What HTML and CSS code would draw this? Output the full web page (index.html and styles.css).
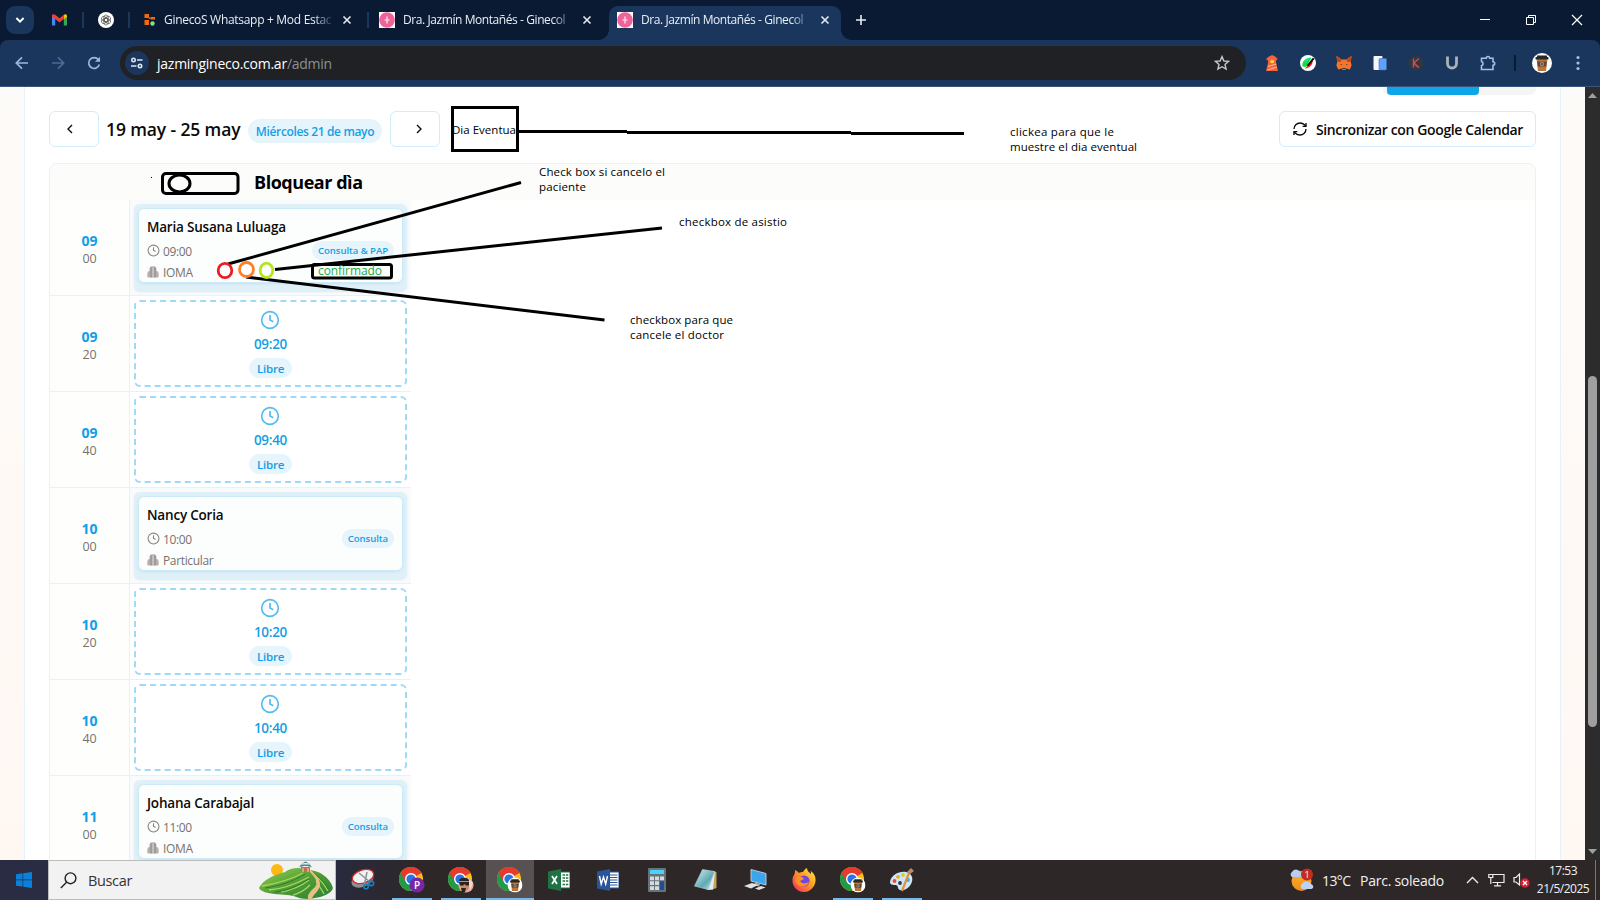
FILE: index.html
```html
<!DOCTYPE html>
<html lang="es">
<head>
<meta charset="utf-8">
<title>Dra. Jazmín Montañés - Ginecología</title>
<link rel="stylesheet" href="styles.css">
</head>
<body>
<svg class="defs" width="0" height="0">
  <defs>
    <linearGradient id="hill" x1="0" y1="0" x2="1" y2="1"><stop offset="0" stop-color="#9bd14e"/><stop offset=".5" stop-color="#4f9c35"/><stop offset="1" stop-color="#2c7f35"/></linearGradient>
    <linearGradient id="fox" x1="1" y1="0" x2="0" y2="1"><stop offset="0" stop-color="#fff04a"/><stop offset=".45" stop-color="#ff9a1f"/><stop offset="1" stop-color="#f0246a"/></linearGradient>
    <linearGradient id="note" x1="0" y1="0" x2="1" y2="1"><stop offset="0" stop-color="#d9f2f5"/><stop offset=".6" stop-color="#5fa9b4"/><stop offset="1" stop-color="#cfe9ee"/></linearGradient>
    <linearGradient id="sun" x1="0" y1="0" x2="0" y2="1"><stop offset="0" stop-color="#ffb62e"/><stop offset="1" stop-color="#f08a1c"/></linearGradient>
    <symbol id="chrome" viewBox="0 0 24 24">
      <circle cx="12" cy="12" r="12" fill="#fbc116"/>
      <path d="M12 12 1.6 6A12 12 0 0 1 22.4 6z" fill="#e33b2e"/>
      <path d="M1.6 6A12 12 0 0 0 12 24l5.2-9L12 12z" fill="#229a48"/>
      <path d="M12 6h10.4A12 12 0 0 0 1.6 6l5.2 9z" fill="#e33b2e"/>
      <circle cx="12" cy="12" r="6" fill="#fff"/><circle cx="12" cy="12" r="4.6" fill="#2a73e8"/>
    </symbol>
    <symbol id="cup" viewBox="0 0 20 20">
      <circle cx="10" cy="10" r="10" fill="#fff"/>
      <path d="M4.5 5.5h11L14 18H6z" fill="#b8763a"/><path d="M3.6 4h12.8v2.6H3.6zM5 2.4h10V4H5z" fill="#2b2724"/>
      <path d="M5.2 8.5h9.6l-.7 5H5.9z" fill="#6d4322"/><circle cx="10" cy="11" r="2.2" fill="#8a8f90"/><path d="M9 11h2" stroke="#2b2724"/>
    </symbol>
    <symbol id="fav" viewBox="0 0 16 16"><path d="M0 0h16v16H0z" fill="#fff"/><circle cx="8" cy="8" r="7.8" fill="#f0629a"/><path d="M8 4.6v7M5.6 8h4.8" stroke="#fbd3e2" stroke-width="1.5"/></symbol>
    <symbol id="x" viewBox="0 0 10 10"><path d="M1.5 1.5l7 7M8.500 1.500l-7 7" stroke="#e6ebf3" stroke-width="1.6"/></symbol>
    <symbol id="clock" viewBox="0 0 24 24"><circle cx="12" cy="12" r="10"/><path d="M12 6v6l4 2"/></symbol>
    <symbol id="building" viewBox="0 0 12 12"><path d="M2.600 2.600Q2.600.4 4.800.3h2.400q2.200.1 2.200 2.300v2.200q2.300.6 2.300 3v2.400q0 1.400-1.400 1.400H1.700Q.3 11.600.3 10.200V7.800q0-2.400 2.300-3z" fill="#b5b0ad"/><path d="M4 1.500v10M8 1.500v10" stroke="#8c8681" stroke-width=".9"/><path d="M6 1.500v10" stroke="#cdc9c6" stroke-width="1.200"/></symbol>
  </defs>
</svg>

<div class="browser">
  <header class="tabstrip">
    <div class="tabsearch"><svg width="10" height="8" viewBox="0 0 10 8"><path d="M1.400 2 5 5.600 8.600 2" fill="none" stroke="#fff" stroke-width="2"/></svg></div>
    <div class="pinned gmail"><svg width="15" height="12" viewBox="0 0 15 12"><path d="M0 2v9.600h3.200V4z" fill="#4285f4"/><path d="M15 2v9.600h-3.200V4z" fill="#34a853"/><path d="M0 1.600C0 0 2 0 3.200.8L7.500 4.200 11.800.8V5L7.500 8.400 3.200 5 0 3z" fill="#ea4335"/><path d="M11.800.8C13-.2 15 0 15 1.800V3l-3.200 2.200z" fill="#fbbc04"/></svg></div>
    <i class="sep"></i>
    <div class="pinned"><svg width="16" height="16" viewBox="0 0 16 16"><circle cx="8" cy="8" r="8" fill="#fff"/><g fill="none" stroke="#555" stroke-width=".7"><rect x="5.800" y="3" width="4.400" height="6.800" rx="2.200"/><rect x="5.800" y="6.200" width="4.400" height="6.800" rx="2.200"/><rect x="5.800" y="3" width="4.400" height="6.800" rx="2.200" transform="rotate(60 8 8)"/><rect x="5.800" y="6.200" width="4.400" height="6.800" rx="2.200" transform="rotate(60 8 8)"/><rect x="5.800" y="3" width="4.400" height="6.800" rx="2.200" transform="rotate(120 8 8)"/><rect x="5.800" y="6.200" width="4.400" height="6.800" rx="2.200" transform="rotate(120 8 8)"/></g></svg></div>
    <i class="sep"></i>
    <div class="tab first"><svg width="16" height="16" viewBox="0 0 16 16"><path d="M1.500 2H6v4H1.500zM7.500 5H12v2.500H7.500zM1.500 8H6v5H1.500z" fill="#f26a0a"/><path d="M5.500 5h2v2h-2z" fill="#c2540a"/><circle cx="9.500" cy="11.500" r="2.200" fill="#7ae57f"/></svg><span class="title t1">GinecoS Whatsapp + Mod Estac</span><svg class="close" width="10" height="10"><use href="#x"/></svg></div>
    <i class="sep"></i>
    <div class="tab second"><svg width="16" height="16"><use href="#fav"/></svg><span class="title">Dra. Jazmín Montañés - Ginecol</span><svg class="close" width="10" height="10"><use href="#x"/></svg></div>
    <div class="tab active"><svg width="16" height="16"><use href="#fav"/></svg><span class="title">Dra. Jazmín Montañés - Ginecol</span><svg class="close" width="10" height="10"><use href="#x"/></svg></div>
    <svg class="plus" width="12" height="12" viewBox="0 0 12 12"><path d="M6 1v10M1 6h10" stroke="#e6ebf3" stroke-width="1.600"/></svg>
    <div class="winctl">
      <svg width="46" height="40" viewBox="0 0 46 40"><path d="M18 19.500h10" stroke="#fff"/></svg>
      <svg width="46" height="40" viewBox="0 0 46 40"><path d="M18.500 17.500h7v7h-7zM20.500 17.500v-2h7v7h-2" fill="none" stroke="#fff"/></svg>
      <svg width="46" height="40" viewBox="0 0 46 40"><path d="M18 15l10 10M28 15 18 25" stroke="#fff" stroke-width="1.200"/></svg>
    </div>
  </header>

  <div class="toolbar">
    <div class="nav">
      <svg width="36" height="36" viewBox="0 0 36 36"><path d="M24 18H12.500M18 12.300 12.300 18l5.700 5.700" fill="none" stroke="#9fb6dc" stroke-width="1.700"/></svg>
      <svg width="36" height="36" viewBox="0 0 36 36"><path d="M12 18h11.500M18 12.300l5.700 5.700-5.700 5.700" fill="none" stroke="#4d6a97" stroke-width="1.700"/></svg>
      <svg width="36" height="36" viewBox="0 0 36 36"><path d="M22.300 14.500a5.400 5.400 0 1 0 1 5" fill="none" stroke="#9fb6dc" stroke-width="1.700"/><path d="M24 11.800v5h-5z" fill="#9fb6dc"/></svg>
    </div>
    <div class="omnibox">
      <span class="site"><svg width="14" height="12" viewBox="0 0 14 12" fill="none" stroke="#dce6f5" stroke-width="1.600"><circle cx="3.500" cy="3" r="1.700"/><path d="M7 3h5.500M1 9h5.500"/><circle cx="10" cy="9" r="1.700"/></svg></span>
      <span class="url">jazmingineco.com.ar<em>/admin</em></span>
      <svg class="star" width="16" height="16" viewBox="0 0 16 16"><path d="M8 1.600 9.900 6l4.700.400-3.600 3.100 1.100 4.600L8 11.700l-4.100 2.400L5 9.500 1.400 6.400 6.100 6z" fill="none" stroke="#c3c6cb" stroke-width="1.400"/></svg>
    </div>
    <div class="exts">
      <svg width="16" height="16" viewBox="0 0 16 16"><path d="M5 1.600 8 0l3.200 1.600 2 2v1.600H12V8l2 8H2l2-8V5.200H2.500V3.600z" fill="#f4633c"/><path d="M6.500 5.200H10V8H6.500z" fill="#ffd43c"/><path d="m4 11.500 8.500-2.500M3.500 15l9.500-3" stroke="#ffb08f" stroke-width="1.200"/></svg>
      <svg width="16" height="16" viewBox="0 0 16 16"><circle cx="8" cy="8" r="8" fill="#fff"/><path d="M2.500 11.500C1.500 6.500 5.500 2.500 11.500 2.500L6 12z" fill="#10e030"/><path d="M4 6.500C6 3.500 8 3 10 3L6 7z" fill="#23d7e0"/><path d="M5 13.500 12.500 5.500c1 3-2.500 7.800-7.500 8z" fill="#f21c1c"/><path d="M6.500 10.500 13 2.500 14.500 4 8.500 11z" fill="#111"/></svg>
      <svg width="16" height="16" viewBox="0 0 16 16"><path d="M.5 1 6 4.500h4L15.500 1l-.7 6 .8 3.500-1.800 4-3.300-1L9 15H7l-1.500-1.500-3.300 1-1.800-4L1.200 7z" fill="#f5762b"/><path d="M.5 1 6 4.500 4.500 7 1.200 7zM15.500 1 10 4.500 11.500 7l3.300 0z" fill="#bc4a1c"/><path d="M4 9l2 .6-.4 1zM12 9l-2 .6.4 1zM6.500 13h3V14h-3z" fill="#26323c"/></svg>
      <svg width="14" height="16" viewBox="0 0 14 16"><rect x=".5" y="1" width="9" height="14" rx="1" fill="#f4f6f9"/><rect x="6" y="3.500" width="7.500" height="11.500" rx="1" fill="#62a1fb" stroke="#3c6fae" stroke-width=".6"/></svg>
      <svg width="16" height="16" viewBox="0 0 16 16"><circle cx="8" cy="8" r="7.800" fill="#2c3846"/><path d="M5.500 3.500v9M10.800 3.500 6 8l4.800 4.600" fill="none" stroke="#d34b4b" stroke-width="1.500"/></svg>
      <svg width="16" height="16" viewBox="0 0 16 16"><path d="M3.500 1.500v7a4.300 4.300 0 0 0 9 0v-7" fill="none" stroke="#a9b2b8" stroke-width="2.800"/></svg>
      <svg width="18" height="18" viewBox="0 0 18 18"><path d="M2.500 4.200h4.800a1.700 1.700 0 1 1 3.400 0h3.300v3.600a1.700 1.700 0 1 1 0 3.400v4.300H2.500v-3.700a2.200 2.200 0 0 0 0-4.200z" fill="none" stroke="#a9bfe2" stroke-width="1.600"/></svg>
    </div>
    <i class="tbsep"></i>
    <svg class="avatar" width="20" height="20"><use href="#cup"/></svg>
    <svg width="4" height="16" viewBox="0 0 4 16" fill="#a9bfe2"><circle cx="2" cy="2.500" r="1.600"/><circle cx="2" cy="8" r="1.600"/><circle cx="2" cy="13.500" r="1.600"/></svg>
  </div>

  <main class="viewport">
    <div class="panel">
      <div class="viewswitch"><b></b></div>
      <div class="actions">
        <span class="btn prev"><svg width="16" height="16" viewBox="0 0 24 24"><path d="m15 18-6-6 6-6"/></svg></span>
        <h2>19 may - 25 may</h2>
        <span class="datepill">Miércoles 21 de mayo</span>
        <span class="btn next"><svg width="16" height="16" viewBox="0 0 24 24"><path d="m9 18 6-6-6-6"/></svg></span>
        <span class="btn sync"><svg width="16" height="16" viewBox="0 0 24 24"><path d="M3 12a9 9 0 0 1 9-9 9.750 9.750 0 0 1 6.740 2.740L21 8"/><path d="M21 3v5h-5"/><path d="M21 12a9 9 0 0 1-9 9 9.750 9.750 0 0 1-6.740-2.740L3 16"/><path d="M8 16H3v5"/></svg><span>Sincronizar con Google Calendar</span></span>
      </div>
      <section class="agenda">
        <div class="dayhead"></div>
        <div class="row"><div class="hour"><b>09</b><span>00</span></div><div class="cell busy"><div class="slot"><div class="card"><strong>Maria Susana Luluaga</strong><div class="info"><svg class="ci" width="13" height="13"><use href="#clock"/></svg><span>09:00</span><em>Consulta &amp; PAP</em></div><div class="info ins"><svg width="12" height="12"><use href="#building"/></svg><span>IOMA</span></div></div></div></div></div>
        <div class="row"><div class="hour"><b>09</b><span>20</span></div><div class="cell"><div class="free"><svg class="big" width="20" height="20"><use href="#clock"/></svg><b>09:20</b><em>Libre</em></div></div></div>
        <div class="row"><div class="hour"><b>09</b><span>40</span></div><div class="cell"><div class="free"><svg class="big" width="20" height="20"><use href="#clock"/></svg><b>09:40</b><em>Libre</em></div></div></div>
        <div class="row"><div class="hour"><b>10</b><span>00</span></div><div class="cell busy"><div class="slot"><div class="card"><strong>Nancy Coria</strong><div class="info"><svg class="ci" width="13" height="13"><use href="#clock"/></svg><span>10:00</span><em>Consulta</em></div><div class="info ins"><svg width="12" height="12"><use href="#building"/></svg><span>Particular</span></div></div></div></div></div>
        <div class="row"><div class="hour"><b>10</b><span>20</span></div><div class="cell"><div class="free"><svg class="big" width="20" height="20"><use href="#clock"/></svg><b>10:20</b><em>Libre</em></div></div></div>
        <div class="row"><div class="hour"><b>10</b><span>40</span></div><div class="cell"><div class="free"><svg class="big" width="20" height="20"><use href="#clock"/></svg><b>10:40</b><em>Libre</em></div></div></div>
        <div class="row"><div class="hour"><b>11</b><span>00</span></div><div class="cell busy"><div class="slot"><div class="card"><strong>Johana Carabajal</strong><div class="info"><svg class="ci" width="13" height="13"><use href="#clock"/></svg><span>11:00</span><em>Consulta</em></div><div class="info ins"><svg width="12" height="12"><use href="#building"/></svg><span>IOMA</span></div></div></div></div></div>
      </section>
    </div>
    <div class="scroll"><svg width="9" height="5" viewBox="0 0 9 5"><path d="M0 5 4.500 0 9 5z" fill="#9f9f9f"/></svg><i></i><svg class="down" width="9" height="5" viewBox="0 0 9 5"><path d="M0 0 4.500 5 9 0z" fill="#9f9f9f"/></svg></div>
  </main>

  <footer class="taskbar">
    <div class="start"><svg width="16" height="16" viewBox="0 0 16 16" fill="#0a80dc"><path d="M0 2.200 6.500 1.300v6.200H0zM7.200 1.200 16 0v7.500H7.200zM0 8.300h6.500v6.300L0 13.700zM7.200 8.300H16V16l-8.800-1.200z"/></svg></div>
    <div class="search"><svg width="17" height="17" viewBox="0 0 17 17" fill="none" stroke="#222" stroke-width="1.400"><circle cx="10.500" cy="6.300" r="5.400"/><path d="M6.600 10.200.8 16"/></svg><span>Buscar</span>
      <svg class="landscape" width="75" height="38" viewBox="0 0 75 38"><circle cx="18" cy="9" r="6" fill="#fdb813"/><path d="M0 27C4 19 14 14 26 11 32 6 42 6 49 9 62 9 72 19 74 27 72 34 60 37 49 38 38 38 36 34 28 34 14 33 2 32 0 27z" fill="url(#hill)"/><g fill="none" stroke="#a5d95c" stroke-width="1.300"><path d="M3 25c12-2 26-5 41-13M10 29c14-1 27-6 40-13M22 31c12-2 20-6 28-12M34 34c7-2 12-5 17-10M56 14c5 4 9 9 13 16M57 20c3 5 6 9 8 13"/></g><g fill="none" stroke="#2f7a31" stroke-width="1"><path d="M6 27c14-2 27-6 40-14M16 31c12-1 23-6 34-13M54 12c6 4 12 10 15 16"/></g><path d="M49 9c7 7 11 12 7 17-4 4-8 7-7 12h4c0-4 8-8 8-15 0-6-5-9-9-14z" fill="#e5c083"/><path d="M40 6.500c4-2 9-2 13 0l-2-3h-9zM42 3c3-1.500 6-1.500 9 0L46.500.500z" fill="#47878c"/><path d="M42 6h9v5h-9z" fill="#c96b50"/><path d="M44 7v4M49 7v4" stroke="#f2d9c4"/></svg>
    </div>
    <nav class="apps">
      <span><svg width="24" height="24" viewBox="0 0 24 24"><ellipse cx="11.500" cy="12" rx="11.500" ry="6.800" fill="#8c8f93" transform="rotate(-22 11.500 12)"/><ellipse cx="12" cy="8.500" rx="11" ry="6.500" fill="#f1f2f4" stroke="#cf2b2b" stroke-width="1.300" transform="rotate(-18 12 8.500)"/><path d="m8 5 11 9M16 4l-2.500 12" stroke="#8c9298" stroke-width="1.500"/><g fill="none" stroke="#1b7fc0" stroke-width="1.600"><circle cx="15" cy="18.500" r="2.300"/><circle cx="20.300" cy="15.300" r="2.300"/></g></svg></span>
      <span class="open"><svg width="26" height="26" viewBox="0 0 26 26"><use href="#chrome" width="24" height="24"/><circle cx="18" cy="18" r="7.600" fill="#7627a5"/><text class="badge" x="18" y="22" text-anchor="middle">P</text></svg></span>
      <span class="open"><svg width="26" height="26" viewBox="0 0 26 26"><use href="#chrome" width="24" height="24"/><circle cx="18" cy="18" r="7.600" fill="#e9a79a"/><path d="m20 11 5 5-3 8z" fill="#f0d9cb"/><path d="M12 14c2-4 8-4 9 0v5c0 4-3 5-4 5-3 0-5-4-5-6z" fill="#c98a6d"/><path d="M11 13c2-3 8-3 10 0v1H11zM11 15h10v3.500h-3l-1.500-1.500-1.500 1.500h-3zM13 21h5l-1 4h-3z" fill="#2a2220"/></svg></span>
      <span class="open current"><svg width="26" height="26" viewBox="0 0 26 26"><use href="#chrome" width="24" height="24"/><use href="#cup" x="10.500" y="10.500" width="15" height="15"/></svg></span>
      <span><svg width="22" height="22" viewBox="0 0 22 22"><path d="M11 3h11v16H11z" fill="#fff" stroke="#217346"/><path d="M14.500 6h6M14.500 9h6M14.500 12h6M14.500 15.500h6" stroke="#217346" stroke-width="1.600" stroke-dasharray="2.500 .8"/><path d="M0 2.500 13 0v22L0 19.500z" fill="#1f7244"/><path d="m4 7 5 8M9 7l-5 8" stroke="#fff" stroke-width="1.700"/></svg></span>
      <span><svg width="22" height="22" viewBox="0 0 22 22"><path d="M11 3h11v16H11z" fill="#fff" stroke="#2b579a"/><path d="M13 6h7.500M13 8.500h7.500M13 11h7.500M13 13.500h7.500M13 16h7.500" stroke="#2b579a" stroke-width="1"/><path d="M0 2.500 13 0v22L0 19.500z" fill="#2a5699"/><path d="m2.500 7 1.700 8L6.500 8l2.200 7 1.800-8" fill="none" stroke="#fff" stroke-width="1.400"/></svg></span>
      <span><svg width="18" height="24" viewBox="0 0 18 24"><rect width="18" height="24" rx="1" fill="#68727b"/><path d="M2 2h14v4H2z" fill="#4bd3f8"/><path d="M2 8.500h4v3.800H2zM7 8.500h4v3.800H7zM12 8.500h4v3.800h-4zM2 13.300h4v3.800H2zM7 13.300h4v3.800H7zM2 18.200h4V22H2zM7 18.200h4V22H7z" fill="#d5dadd"/><path d="M12 13.300h4V22h-4z" fill="#1e4f91"/></svg></span>
      <span><svg width="24" height="24" viewBox="0 0 24 24"><path d="m17 22 5.500-2V4L19 3z" fill="#c3a457"/><path d="M8 2 21 3.500l-2 18-6 .5z" fill="#e3eced"/><path d="M8.500 1.500 20.500 3.500 14 21.500.5 18z" fill="url(#note)" stroke="#a8c5ca" stroke-width=".7"/></svg></span>
      <span><svg width="24" height="24" viewBox="0 0 24 24"><path d="m8 1.500 15 4V17L8 13z" fill="#3ba5ee" stroke="#b8c9d5"/><path d="m12 14.500 5 1.500-1 2.500-5-1z" fill="#a5adb4"/><path d="m1 18 8-3 6 2-7 3.500zM12 20.500l6-2.500 4.500 1.500L16 22z" fill="#dfe3e6"/></svg></span>
      <span><svg width="24" height="24" viewBox="0 0 24 24"><path d="M2 7c1-2 1-3 1-5 2 1 3 2 4 3 1-1 3-1 4-1 1-2 2-3 4-4 0 3 2 4 4 6 0-1 0-2-.5-3C22 5 24 9 23.500 13 23 19 18 24 12 24 5 24 0 18 .5 12c0-2 .5-3.500 1.500-5z" fill="url(#fox)"/><circle cx="12" cy="13" r="5.600" fill="#7047e0"/><path d="M5 9c3-1 6 0 7 2l-4 2c2 3 5 3 9 1-2 6-12 6-14-1z" fill="#ff9022"/></svg></span>
      <span class="open"><svg width="26" height="26" viewBox="0 0 26 26"><use href="#chrome" width="24" height="24"/><use href="#cup" x="10.500" y="10.500" width="15" height="15"/></svg></span>
      <span class="open"><svg width="24" height="24" viewBox="0 0 24 24"><path d="M0 14C1 7 9 3 16 4c6 1 8 7 5 12-2 4-7 7-11 6-3-1-1-4-4-5-3 0-6 0-6-3z" fill="#cfe6f5"/><circle cx="4.500" cy="13" r="1.900" fill="#e84838"/><circle cx="8" cy="8.800" r="1.900" fill="#f0a524"/><circle cx="13" cy="7" r="1.900" fill="#d9d024"/><circle cx="18" cy="12" r="1.900" fill="#48a4ee"/><circle cx="10" cy="15" r="1.900" fill="#29354a"/><path d="m12 23 7-18" stroke="#e0913b" stroke-width="2.200"/><path d="m17 4 4-4 3 3-4 3z" fill="#b98b66"/></svg></span>
    </nav>
    <div class="tray">
      <svg class="weather" width="26" height="24" viewBox="0 0 26 24"><circle cx="12.500" cy="13" r="10" fill="url(#sun)"/><path d="M3 9a3 3 0 0 1 0-5 5 5 0 0 1 9 1c2 1 2 4 0 4z" fill="#b9cdf3"/><path d="M13 21a3 3 0 0 1 0-5 5 5 0 0 1 9 0c3 1 3 5 0 5z" fill="#bed2f8"/><circle cx="18" cy="6.500" r="6" fill="#c32d20"/><text class="wn" x="18" y="10" text-anchor="middle">1</text></svg>
      <span class="temp">13°C</span><span class="sky">Parc. soleado</span>
      <svg class="up" width="13" height="8" viewBox="0 0 13 8"><path d="m1 7 5.500-5.500L12 7" fill="none" stroke="#eee" stroke-width="1.400"/></svg>
      <svg class="net" width="17" height="14" viewBox="0 0 17 14"><path d="M5 1.500h11v8H4.500M9.500 9.500v3M6 12.800h7M.8 1.500h4v3h-4zM2.800 4.500V11" fill="none" stroke="#eee" stroke-width="1.200"/></svg>
      <svg class="vol" width="17" height="15" viewBox="0 0 17 15"><path d="M1 4.500h2L6.500 1v11L3 9H1z" fill="none" stroke="#eee" stroke-width="1.200"/><circle cx="12" cy="10" r="4.700" fill="#d9202e"/><path d="m10 8 4 4M14 8l-4 4" stroke="#fff" stroke-width="1.300"/></svg>
      <div class="clock"><span>17:53</span><span>21/5/2025</span></div>
      <i></i>
    </div>
  </footer>

  <!-- Hand-drawn notes laid over the page -->
  <svg class="notes" width="1600" height="900" viewBox="0 0 1600 900">
    <g fill="none" stroke="#000" stroke-width="3" shape-rendering="crispEdges">
      <rect x="452.500" y="107.500" width="65" height="43"/>
      <path d="M519 131.500h108M627 132.500h224M851 133.500h113"/>
    </g>
    <g fill="none" stroke="#000" stroke-width="3">
      <path d="M228 264 521 182.500M275 269.500 662 228M246 277l358.500 43"/>
      <rect x="162.500" y="173.500" width="75.500" height="20" rx="3.500"/>
      <ellipse cx="179.500" cy="183.500" rx="10.500" ry="8.500"/>
      <rect x="312.500" y="264.500" width="79" height="13.500" rx="2"/>
    </g>
    <g fill="none" stroke-width="2.800">
      <ellipse cx="225" cy="270.500" rx="6.800" ry="7.200" stroke="#ed1c24"/>
      <ellipse cx="246.500" cy="269.500" rx="7" ry="7" stroke="#ff7f27"/>
      <ellipse cx="266.500" cy="270.300" rx="6.300" ry="7.200" stroke="#b5e61d"/>
    </g>
    <rect x="151" y="177" width="1" height="1"/>
    <g class="hand">
      <text x="452" y="134" textLength="64">Dia Eventua</text>
      <text x="1010" y="136" textLength="104">clickea para que le</text>
      <text x="1010" y="151" textLength="127">muestre el dia eventual</text>
      <text x="539" y="176" textLength="126">Check box si cancelo el</text>
      <text x="539" y="191" textLength="47">paciente</text>
      <text x="679" y="226" textLength="108">checkbox de asistio</text>
      <text x="630" y="324" textLength="103">checkbox para que</text>
      <text x="630" y="339" textLength="94">cancele el doctor</text>
      <text class="ok" x="318" y="274.500" textLength="64">confirmado</text>
    </g>
    <text class="block" x="254" y="189" textLength="109">Bloquear dìa</text>
  </svg>
</div>
</body>
</html>
```

FILE: styles.css
```css
* { box-sizing: border-box; }
body { margin: 0; overflow: hidden; font-family: "Open Sans", "Noto Sans", sans-serif; }
svg { display: block; flex: none; }
em { font-style: normal; }
.defs { position: absolute; }
.browser { position: relative; width: 1600px; height: 900px; display: flex; flex-direction: column; background: #0a1a33; }

/* Tabs */
.tabstrip { height: 40px; display: flex; align-items: center; padding-left: 6px; flex: none; }
.tabsearch { width: 28px; height: 28px; border-radius: 9px; background: #1a365d; display: flex; align-items: center; justify-content: center; margin-right: 3px; }
.pinned { width: 45px; display: flex; justify-content: center; }
.sep { width: 2px; height: 16px; background: #1a365d; flex: none; margin-right: -1px; }
.tab { display: flex; align-items: center; height: 34px; padding-bottom: 6px; margin-top: 6px; flex: none; }
.tab.first { width: 238px; padding-left: 14px; padding-right: 15px; }
.tab.second { width: 241px; padding-left: 11px; padding-right: 17px; }
.title { flex: none; width: 174px; margin-left: 8px; white-space: nowrap; font-size: 12px; line-height: 18px; color: #e9eef6; letter-spacing: -.42px; -webkit-mask-image: linear-gradient(90deg, #000 150px, transparent 170px); mask-image: linear-gradient(90deg, #000 150px, transparent 170px); }
.title.t1 { margin-left: 5px; letter-spacing: -.3px; }
.close { margin-left: auto; }
.tab.active { position: relative; width: 232px; padding-left: 8px; padding-right: 11px; background: #1a365d; border-radius: 9px 9px 0 0; }
.tab.active::before, .tab.active::after { content: ""; position: absolute; bottom: 0; width: 10px; height: 10px; }
.tab.active::before { left: -10px; background: radial-gradient(circle at 0 0, transparent 9.500px, #1a365d 10px); }
.tab.active::after { right: -10px; background: radial-gradient(circle at 100% 0, transparent 9.500px, #1a365d 10px); }
.plus { margin-left: 14px; }
.winctl { display: flex; margin-left: auto; }

/* Toolbar */
.toolbar { height: 47px; flex: none; display: flex; align-items: center; padding: 0 20px 0 4px; background: #1a365d; border-radius: 8px 8px 0 0; border-bottom: 1px solid #3a5480; }
.nav { display: flex; width: 116px; }
.omnibox { width: 1126px; height: 34px; border-radius: 17px; background: #202124; display: flex; align-items: center; padding: 0 16px 0 5px; }
.site { width: 24px; height: 24px; border-radius: 50%; background: #1a365d; display: flex; align-items: center; justify-content: center; }
.url { margin-left: 8px; font-size: 14px; letter-spacing: -.25px; color: #fff; }
.url em { color: #8d9095; }
.star { margin-left: auto; }
.exts { display: grid; grid-template-columns: repeat(7, 36px); justify-items: center; align-items: center; margin-left: 8px; }
.tbsep { width: 2px; height: 16px; margin: 0 16px 0 8px; background: #0a1a33; }
.avatar { margin-right: 24px; }

/* Page */
.viewport { flex: 1; min-height: 0; display: flex; overflow: hidden; padding-left: 24px; background: linear-gradient(#fdfbf9, #fff7f2); }
.panel { width: 1537px; flex: none; background: #fff; border: solid #e3f2fb; border-width: 0 1px; padding: 0 24px; }
.viewswitch { width: 153px; height: 8px; margin: 0 0 0 auto; padding-left: 4px; background: #f5f5f4; border-radius: 0 0 6px 6px; }
.viewswitch b { display: block; width: 92px; height: 8px; background: #0ea5e9; border-radius: 0 0 4px 4px; }
.actions { display: flex; align-items: center; height: 36px; margin-top: 16px; }
.btn { height: 36px; border: 1px solid #d0edfb; border-radius: 6px; display: flex; align-items: center; background: #fff; color: #0c0a09; }
.btn svg { fill: none; stroke: #0c0a09; stroke-width: 2; }
.prev, .next { width: 50px; justify-content: center; }
.prev { padding-right: 8px; }
.next { margin-left: 8px; padding-left: 7px; }
.actions h2 { margin: 0 0 0 7px; width: 134px; font-size: 17.500px; font-weight: 600; white-space: nowrap; letter-spacing: -.12px; color: #0c0a09; }
.datepill { margin: 4px 0 0 8px; width: 134px; height: 24px; border-radius: 12px; background: #e6f4fc; color: #149fe4; font-size: 12px; line-height: 25px; font-weight: 600; text-align: center; white-space: nowrap; letter-spacing: -.36px; }
.sync { width: 257px; margin-left: auto; padding-left: 12px; font-size: 14px; font-weight: 600; white-space: nowrap; letter-spacing: -.38px; }
.sync span { margin-left: 8px; }
.agenda { margin-top: 16px; border: 1px solid #e2f3fc; border-radius: 8px; height: 760px; overflow: hidden; }
.dayhead { height: 36px; background: #fcfcfb; }
.row { display: grid; grid-template-columns: 80px 281px; height: 96px; width: 361px; border-bottom: 1px solid #e4f3fb; }
.hour { border-right: 1px solid #e4f3fb; background: #fefefd; display: flex; flex-direction: column; align-items: center; justify-content: center; padding-top: 3px; font-size: 12.500px; line-height: 18px; color: #78716c; letter-spacing: -.2px; }
.hour b { font-size: 14px; line-height: 19px; color: #0ea0e8; letter-spacing: 0; }
.cell { padding: 4px; }
.cell.busy { background: #f8fafc; }
.slot { height: 87px; padding: 4px 4px 8px; background: #e0f0f7; border-radius: 6px; box-shadow: 0 1px 2px #dcebf3; }
.card { height: 75px; padding: 8px 8px 0; border: 1px solid #cdeaf8; border-radius: 6px; background: #fcfefe; box-shadow: 0 1px 3px #c5e4f2; }
.card strong { display: block; font-size: 13.500px; line-height: 20px; font-weight: 600; letter-spacing: -.2px; color: #0c0a09; }
.info { display: flex; align-items: center; height: 19px; margin-top: 4px; font-size: 12px; color: #78716c; letter-spacing: -.35px; }
.info span { margin-left: 3px; padding-top: 1px; }
.info em { margin-left: auto; padding: 0 6px; height: 19px; border-radius: 10px; background: #e6f4fc; color: #149fe4; font-size: 9.600px; line-height: 19px; font-weight: 600; letter-spacing: -.08px; }
.ins { margin-top: 2px; }
.ins span { margin-left: 4px; }
.ci, .big { fill: none; stroke: #8a847f; stroke-width: 2; }
.big { stroke: #56bbee; margin-right: 1px; }
.free { height: 87px; border: 2px dashed #a0d9f5; border-radius: 6px; display: flex; flex-direction: column; align-items: center; padding-top: 8px; color: #149fe4; }
.free b { margin-top: 4px; font-size: 13.500px; line-height: 20px; font-weight: 600; letter-spacing: -.3px; }
.free em { margin-top: 4px; width: 43px; height: 20px; border-radius: 10px; background: #e6f4fc; font-size: 11.500px; line-height: 21px; font-weight: 600; text-align: center; letter-spacing: -.2px; }
.scroll { width: 15px; margin-left: auto; background: #2c2c2c; display: flex; flex-direction: column; align-items: center; padding: 6px 0; }
.scroll i { width: 9px; height: 351px; margin-top: 278px; border-radius: 5px; background: #9f9f9f; }
.scroll .down { margin-top: auto; }

/* Taskbar */
.taskbar { height: 40px; flex: none; display: flex; align-items: center; background: linear-gradient(90deg, #292c43 0, #292a3d 340px, #2e2728 420px, #2e2728); color: #f1f1f1; }
.start { width: 48px; display: flex; justify-content: center; }
.search { width: 288px; height: 40px; display: flex; align-items: center; padding-left: 11px; background: #f2f2f2; border: 1px solid #bdbdbd; color: #333; font-size: 14.500px; letter-spacing: -.35px; }
.search span { margin-left: 11px; }
.landscape { margin: 0 1px 0 auto; }
.apps { display: flex; margin-left: 2px; }
.apps span { width: 49px; height: 40px; display: flex; align-items: center; justify-content: center; }
.apps .open { background: linear-gradient(#76b9ed, #76b9ed) 50% 100% / 40px 2px no-repeat; }
.apps .current { background: linear-gradient(#76b9ed, #76b9ed) 50% 100% / 48px 2px no-repeat, linear-gradient(#575152, #575152) 50% 0 / 48px 40px no-repeat; }
.badge { fill: #fff; font-size: 10px; font-weight: 600; }
.tray { margin-left: auto; display: flex; align-items: center; height: 40px; font-size: 14px; letter-spacing: -.25px; white-space: nowrap; }
.temp { width: 38px; margin-left: 7px; letter-spacing: -.6px; }
.sky { width: 82px; }
.wn { fill: #fff; font-size: 9px; }
.up { margin-left: 24px; }
.net { margin-left: 9px; }
.vol { margin-left: 8px; }
.clock { width: 54px; margin-left: 6px; display: flex; flex-direction: column; align-items: center; font-size: 12px; line-height: 18px; letter-spacing: -.5px; }
.tray i { width: 1px; height: 40px; margin: 0 4px 0 5px; background: #777; }

/* Notes */
.notes { position: absolute; left: 0; top: 0; pointer-events: none; }
.hand { font-size: 11.500px; fill: #000; }
.ok { font-size: 12px; fill: #22a83c; }
.block { font-size: 18px; font-weight: 700; }
```
